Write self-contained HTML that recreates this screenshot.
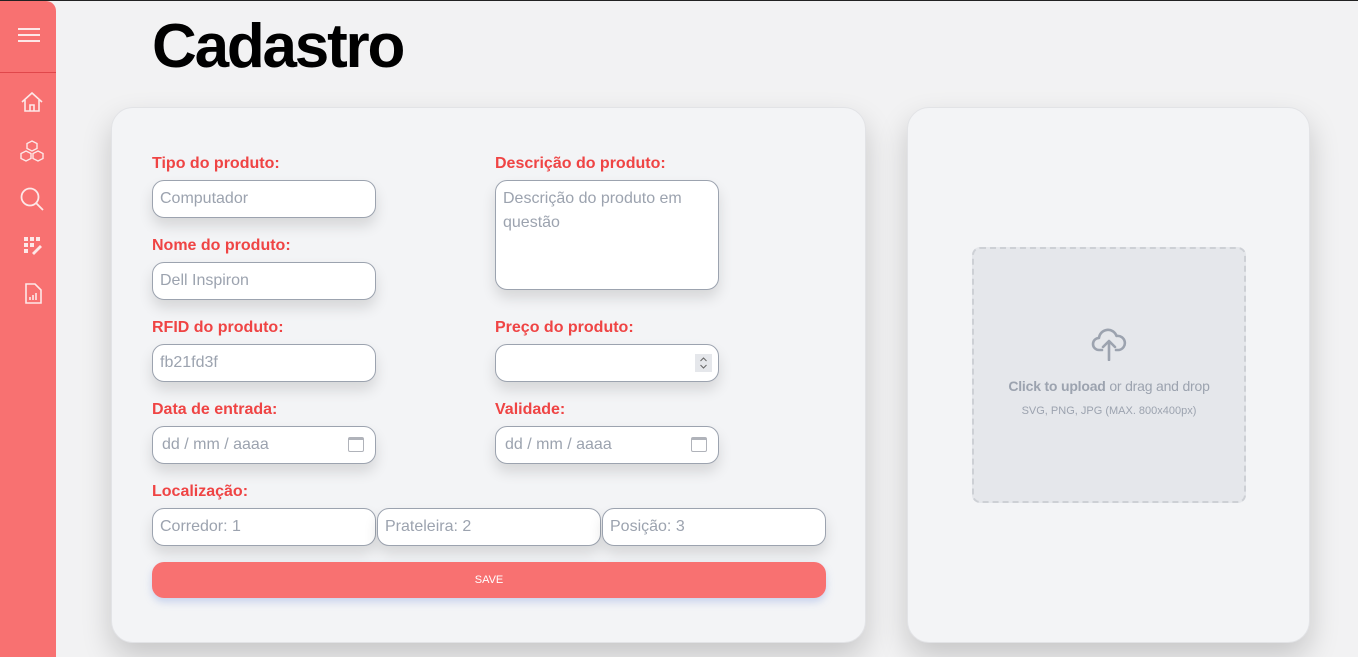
<!DOCTYPE html>
<html><head><meta charset="utf-8"><style>
*{box-sizing:border-box;margin:0;padding:0}
body{width:1358px;height:656px;background:#f2f2f3;font-family:"Liberation Sans",Arial,sans-serif;position:relative;overflow:hidden}
.top{position:absolute;left:0;top:0;width:1358px;height:1px;background:#222}
.side{position:absolute;left:0;top:1px;width:56px;height:656px;background:#f87171;border-top-right-radius:10px}
.side .div{position:absolute;top:71px;left:0;width:56px;height:1px;background:#e0474b}
.side svg{position:absolute;left:18px}
h1{position:absolute;left:152px;top:11px;font-size:62px;font-weight:bold;color:#000;letter-spacing:-2.2px}
.card{position:absolute;background:#f3f4f6;border:1px solid #e2e3e6;border-radius:22px;box-shadow:0 14px 30px rgba(0,0,0,.18)}
.lbl{position:absolute;color:#ef4444;font-weight:bold;font-size:16px}
.in{position:absolute;background:#fff;border:1px solid #9ca3af;border-radius:12px;height:38px;width:224px;color:#9ca3af;font-size:16px;padding:9px 7px;box-shadow:0 8px 14px rgba(0,0,0,.12)}
.cal{position:absolute;right:11px;top:10px;width:16px;height:15px;border:1.5px solid #b0b3ba;border-radius:2px;border-top-width:3px}
</style></head><body>
<div class="top"></div>
<div class="side">
<svg style="top:26px" width="22" height="16" viewBox="0 0 22 16"><path d="M0 2h22M0 8h22M0 14h22" stroke="#fde8e8" stroke-width="2"/></svg>
<div class="div"></div>
<svg style="top:90px;left:20px" width="24" height="22" viewBox="0 0 24 22" fill="none" stroke="#fde8e8" stroke-width="1.6"><path d="M2 11L12 2l10 9M5 9v11h14V9M10 20v-6h4v6"/></svg>
<svg style="top:138px;left:19px" width="26" height="26" viewBox="0 0 26 26" fill="none" stroke="#fde8e8" stroke-width="1.4"><path d="M13 2l5 2.5v5L13 12l-5-2.5v-5zM7 12l5 2.5v5L7 22l-5-2.5v-5zM19 12l5 2.5v5L19 22l-5-2.5v-5z"/></svg>
<svg style="top:185px;left:19px" width="26" height="26" viewBox="0 0 26 26" fill="none" stroke="#fde8e8" stroke-width="1.8"><circle cx="11" cy="11" r="8.5"/><path d="M17 17l7 7"/></svg>
<svg style="top:236px;left:24px" width="18" height="18" viewBox="0 0 18 18" fill="#fde8e8"><rect x="0" y="0" width="4" height="4"/><rect x="6" y="0" width="4" height="4"/><rect x="12" y="0" width="4" height="4"/><rect x="0" y="6" width="4" height="4"/><rect x="6" y="6" width="4" height="4"/><rect x="0" y="12" width="4" height="4"/><path d="M8 16l8-8 2 2-8 8z"/></svg>
<svg style="top:282px;left:24px" width="18" height="22" viewBox="0 0 18 22" fill="none" stroke="#fde8e8" stroke-width="1.6"><path d="M2 1h9l6 6v13H2zM6 17v-3M9 17v-5M12 17v-7"/></svg>
</div>
<h1>Cadastro</h1>
<div class="card" style="left:111px;top:107px;width:755px;height:536px"></div>
<div class="card" style="left:907px;top:107px;width:403px;height:536px"></div>

<div class="lbl" style="left:152px;top:155px">Tipo do produto:</div>
<div class="in" style="left:152px;top:180px">Computador</div>
<div class="lbl" style="left:152px;top:237px">Nome do produto:</div>
<div class="in" style="left:152px;top:262px">Dell Inspiron</div>
<div class="lbl" style="left:152px;top:319px">RFID do produto:</div>
<div class="in" style="left:152px;top:344px">fb21fd3f</div>
<div class="lbl" style="left:152px;top:401px">Data de entrada:</div>
<div class="in" style="left:152px;top:426px;padding-left:9px">dd / mm / aaaa<div class="cal"></div></div>
<div class="lbl" style="left:152px;top:483px">Localização:</div>
<div class="in" style="left:152px;top:508px">Corredor: 1</div>
<div class="in" style="left:377px;top:508px">Prateleira: 2</div>
<div class="in" style="left:602px;top:508px">Posição: 3</div>

<div class="lbl" style="left:495px;top:155px">Descrição do produto:</div>
<div class="in" style="left:495px;top:180px;height:110px;line-height:24px;padding-top:6px">Descrição do produto em questão</div>
<div class="lbl" style="left:495px;top:319px">Preço do produto:</div>
<div class="in" style="left:495px;top:344px"><svg style="position:absolute;right:6px;top:9px;background:#e5e7eb" width="17" height="18" viewBox="0 0 17 18" fill="none" stroke="#666" stroke-width="1"><path d="M5.5 7l3-3 3 3M5.5 11l3 3 3-3"/></svg></div>
<div class="lbl" style="left:495px;top:401px">Validade:</div>
<div class="in" style="left:495px;top:426px;padding-left:9px">dd / mm / aaaa<div class="cal"></div></div>

<div style="position:absolute;left:152px;top:562px;width:674px;height:36px;background:#f87171;border-radius:12px;color:#fff;font-size:11px;text-align:center;line-height:37px;box-shadow:0 4px 8px rgba(120,150,220,.35)">SAVE</div>

<div style="position:absolute;left:972px;top:247px;width:274px;height:256px;background:#e5e7eb;border:2px dashed #cdd0d5;border-radius:8px"></div>
<svg style="position:absolute;left:1091px;top:325px" width="36" height="36" viewBox="0 0 36 36" fill="none" stroke="#9ca3af" stroke-width="2.6" stroke-linecap="round" stroke-linejoin="round"><path d="M11 25h-3a6 6 0 0 1 0-12 9 9 0 0 1 17.5-2A7 7 0 0 1 28 25h-3M18 35V16M12 22l6-6 6 6"/></svg>
<div style="position:absolute;left:972px;top:378px;width:274px;text-align:center;font-size:14px;color:#9ca3af;letter-spacing:-0.2px"><b>Click to upload</b> or drag and drop</div>
<div style="position:absolute;left:972px;top:405px;width:274px;text-align:center;font-size:11px;color:#9ca3af">SVG, PNG, JPG (MAX. 800x400px)</div>
</body></html>
